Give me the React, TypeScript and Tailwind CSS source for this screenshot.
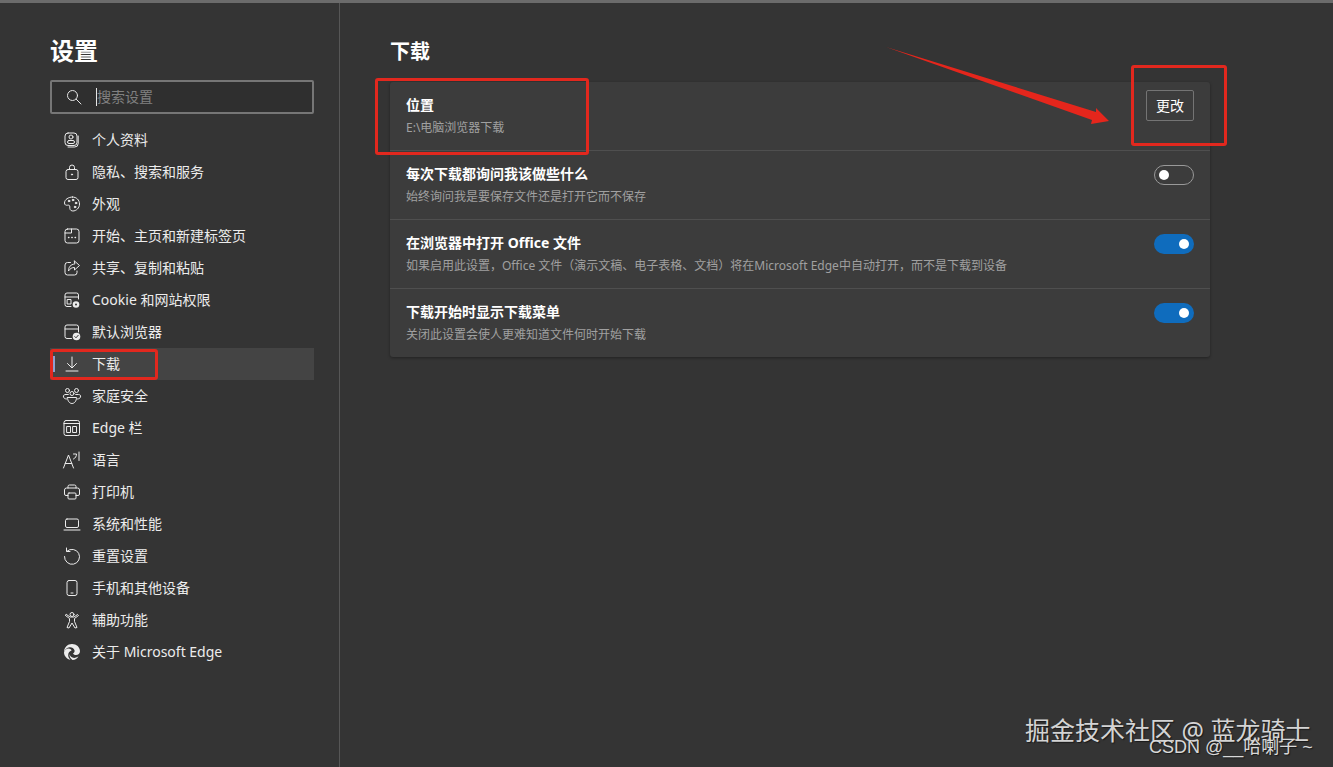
import React from 'react'

type IconProps = { children: React.ReactNode }

function Icon({ children }: IconProps) {
    return (
        <svg viewBox="0 0 16 16" fill="none" stroke="#ececec" strokeWidth="1" strokeLinecap="round" strokeLinejoin="round" className="w-4 h-4 shrink-0 overflow-visible">
            {children}
        </svg>
    )
}

const icons: Record<string, React.ReactNode> = {
    profile: (
        <>
            <rect x="1" y="1" width="12" height="12.5" rx="3" />
            <path d="M14.2 4v7.5a3.5 3.5 0 0 1-3.5 3.5H4" />
            <circle cx="7" cy="5" r="2" />
            <rect x="3.5" y="8.5" width="7" height="3" rx="1.5" />
        </>
    ),
    lock: (
        <>
            <rect x="2" y="5.5" width="12" height="10" rx="2" />
            <path d="M5.5 5.5V3.5a2.5 2.5 0 0 1 5 0v2" />
            <circle cx="8" cy="10.5" r="0.6" fill="#ececec" />
        </>
    ),
    palette: (
        <>
            <path d="M8.5 1C4.5 1 .5 3.5.5 7c0 2 1.5 2.5 3 2.2 1.500-.3 2.500.3 2.300 1.800-.2 1.500.2 4 3 4 3.500 0 6.700-3 6.700-7s-3-7-7-7z" />
            <circle cx="5" cy="5" r="0.8" fill="#ececec" />
            <circle cx="9" cy="4" r="0.8" fill="#ececec" />
            <circle cx="12" cy="7" r="0.8" fill="#ececec" />
            <circle cx="11" cy="11" r="0.8" fill="#ececec" />
        </>
    ),
    start: (
        <>
            <rect x="1" y="1" width="14" height="14" rx="2.500" />
            <path d="M1 5h6.500V1" />
            <path d="M4.500 9.500h.4M7.800 9.500h.4M11.100 9.500h.4" strokeWidth="1.400" />
        </>
    ),
    share: (
        <>
            <path d="M6.500 2.500H3.500a2.500 2.500 0 0 0-2.500 2.500v7.500a2.500 2.500 0 0 0 2.500 2.500h7a2.500 2.500 0 0 0 2.500-2.500V11" />
            <path d="M10.500 1l5 4.500-5 4.500V7.500C8 7.500 6 8.500 4.500 11c0-4 2-6.500 6-7z" />
        </>
    ),
    cookie: (
        <>
            <path d="M7 14.500H3a2 2 0 0 1-2-2V3a2 2 0 0 1 2-2h9.500a2 2 0 0 1 2 2v4" />
            <path d="M1 5h13.500" />
            <rect x="3.500" y="7.500" width="3.500" height="4.500" />
            <circle cx="12" cy="12.500" r="3.300" fill="#ececec" stroke="none" />
            <circle cx="12" cy="12.500" r="1" fill="#343434" stroke="none" />
        </>
    ),
    browser: (
        <>
            <path d="M7.500 14.500H3a2 2 0 0 1-2-2V3a2 2 0 0 1 2-2h9.500a2 2 0 0 1 2 2v5" />
            <path d="M1 5h13.500" />
            <circle cx="12.500" cy="12.500" r="3.800" fill="#ececec" stroke="none" />
            <path d="M10.800 12.600l1.200 1.200 2.200-2.500" stroke="#343434" />
        </>
    ),
    download: (
        <>
            <path d="M8 1v10.500" />
            <path d="M3.500 7.500L8 12l4.500-4.500" />
            <path d="M2 15h12" />
        </>
    ),
    family: (
        <>
            <circle cx="3.500" cy="2.500" r="2" />
            <circle cx="12.500" cy="2.500" r="2" />
            <circle cx="8" cy="5.500" r="2" />
            <path d="M1.500 6.500h2.800M11.700 6.500h2.800C16 6.500 17 7.500 16.500 9c-.4 1.200-1.500 2-3 2M1.500 6.500C0 6.500-1 7.500-.5 9c.4 1.200 1.500 2 3 2" />
            <path d="M3.500 9.500h9c0 3.500-2 6-4.500 6s-4.500-2.500-4.500-6z" />
        </>
    ),
    edgebar: (
        <>
            <rect x="0" y="0.500" width="15.500" height="15" rx="2" />
            <path d="M0 3.500h15.500" />
            <rect x="3" y="6.500" width="3.500" height="6" />
            <rect x="9" y="6.500" width="3.500" height="6" />
        </>
    ),
    language: (
        <>
            <path d="M-.5 16L4.500 3l5 13M1.200 11.500h6.600" />
            <path d="M9.500 2h3c0 2.200-1 4-3 5M15 0v8.500" />
        </>
    ),
    printer: (
        <>
            <path d="M4 4V2.500A1.500 1.500 0 0 1 5.500 1h5A1.500 1.500 0 0 1 12 2.500V4" />
            <path d="M4 11.500H2A1.500 1.500 0 0 1 .5 10V6A2 2 0 0 1 2.500 4h11a2 2 0 0 1 2 2v4a1.500 1.500 0 0 1-1.500 1.500h-2" />
            <rect x="4" y="9" width="8" height="6" rx="1" />
        </>
    ),
    laptop: (
        <>
            <rect x="1.500" y="3" width="13" height="8.500" rx="1.500" />
            <path d="M0 14h16" />
        </>
    ),
    reset: (
        <>
            <path d="M3 3.200A7.500 7.500 0 1 1 .5 8.500" />
            <path d="M2.500 0v3.500H6" />
        </>
    ),
    phone: (
        <>
            <rect x="3" y="0.500" width="10" height="15" rx="2" />
            <path d="M7 13h2" />
        </>
    ),
    access: (
        <>
            <circle cx="8" cy="2.500" r="2" />
            <path d="M1.500 3.500L5.500 6.500v3L3 15.500l2 .5L8 11l3 5 2-.5-2.500-6v-3l4-3-1-1L10 5H6L2.500 2.500z" />
        </>
    ),
    edge: (
        <>
            <path
                d="M8 0c4.500 0 8 3.200 8 7.200 0 2.300-1.700 3.800-4 3.800-1.500 0-2.800-.6-3-1.500C10.500 8.500 10.800 7.500 10.500 6.300 9.800 4 7.500 3 5.500 3.300 3 3.700 1 5.500 0 8 .2 3.500 3.500 0 8 0z"
                fill="#ececec"
                stroke="none"
            />
            <path
                d="M0 8.500c.3-2 2.200-4 4.500-4 1.800 0 3 1 3 2-2 .6-3.500 2.500-3.300 5 .1 1.600 1 3 2.300 4.200C3 15.200.2 12.300 0 8.500z"
                fill="#ececec"
                stroke="none"
            />
            <path
                d="M5.500 10c.5 2.500 3 4.700 6.500 3.600.8-.2 1.800-.8 2.500-1.400-1 2.300-3.500 3.800-6 3.800-2-1.300-3.300-3.500-3-6z"
                fill="#ececec"
                stroke="none"
            />
        </>
    ),
}

const navItems = [
    { label: '个人资料', icon: 'profile' },
    { label: '隐私、搜索和服务', icon: 'lock' },
    { label: '外观', icon: 'palette' },
    { label: '开始、主页和新建标签页', icon: 'start' },
    { label: '共享、复制和粘贴', icon: 'share' },
    { label: 'Cookie 和网站权限', icon: 'cookie' },
    { label: '默认浏览器', icon: 'browser' },
    { label: '下载', icon: 'download', active: true },
    { label: '家庭安全', icon: 'family' },
    { label: 'Edge 栏', icon: 'edgebar' },
    { label: '语言', icon: 'language' },
    { label: '打印机', icon: 'printer' },
    { label: '系统和性能', icon: 'laptop' },
    { label: '重置设置', icon: 'reset' },
    { label: '手机和其他设备', icon: 'phone' },
    { label: '辅助功能', icon: 'access' },
    { label: '关于 Microsoft Edge', icon: 'edge' },
]

function Toggle({ on }: { on: boolean }) {
    if (on) {
        return (
            <div className="w-10 h-5 rounded-full bg-[#0f6cbd] flex items-center justify-end pr-[5px]">
                <div className="w-[10px] h-[10px] rounded-full bg-white" />
            </div>
        )
    }
    return (
        <div className="w-10 h-5 rounded-full border border-[#999] flex items-center pl-[4px]">
            <div className="w-[10px] h-[10px] rounded-full bg-white" />
        </div>
    )
}

function SettingRow({ title, desc, children, last }: { title: string; desc: string; children: React.ReactNode; last?: boolean }) {
    return (
        <div className={`flex justify-between pl-4 pr-4 pt-[13px] ${last ? 'h-[68px]' : 'h-[69px] border-b border-[#4f4f4f]'}`}>
            <div>
                <div className="text-sm font-bold leading-5 text-white">{title}</div>
                <div className="text-xs leading-[18px] mt-[4px] text-[#a0a0a0]">{desc}</div>
            </div>
            {children}
        </div>
    )
}

export default function App() {
    return (
        <div
            className="h-screen w-full overflow-hidden relative flex flex-col bg-[#343434] text-[#ececec]"
            style={{ fontFamily: '"Noto Sans", "Noto Sans CJK SC", sans-serif' }}
        >
            <div className="h-[3px] bg-[#6b6b6b] shrink-0" />
            <div className="flex flex-1">
                {/* Sidebar */}
                <aside className="w-[340px] shrink-0 border-r border-[#565656] pl-[50px] pr-[25px] pt-[32px]">
                    <h1 className="text-2xl font-bold leading-8 text-white">设置</h1>
                    <div className="mt-[13px] h-[34px] border-2 border-[#767676] rounded-[2px] bg-[#2f2f2f] flex items-center pl-[14px] pb-[1px]">
                        <svg viewBox="0 0 16 16" fill="none" stroke="#e6e6e6" strokeWidth="1" strokeLinecap="round" className="w-4 h-4 shrink-0">
                            <circle cx="6.500" cy="6.500" r="5" />
                            <path d="M10.200 10.200L15 15" />
                        </svg>
                        <div className="w-px h-[18px] bg-[#e6e6e6] ml-[14px]" />
                        <span className="text-sm text-[#808080]">搜索设置</span>
                    </div>
                    <nav className="mt-[10px]">
                        {navItems.map((item) => (
                            <div
                                key={item.label}
                                className={`relative h-8 flex items-center gap-3 pl-[14px] text-sm ${item.active ? 'bg-[#444444]' : ''}`}
                            >
                                {item.active && <div className="absolute left-[3px] top-2 w-[2px] h-4 bg-[#8f9fd0]" />}
                                <Icon>{icons[item.icon]}</Icon>
                                <span>{item.label}</span>
                            </div>
                        ))}
                    </nav>
                </aside>

                {/* Main */}
                <main className="flex-1 pl-[50px] pt-[33px]">
                    <h2 className="text-xl font-bold leading-8 text-white">下载</h2>
                    <div className="mt-[14px] w-[820px] bg-[#3c3c3c] rounded-[3px] shadow-[0_1px_3px_rgba(0,0,0,0.35)]">
                        <SettingRow title="位置" desc="E:\电脑浏览器下载">
                            <button className="w-12 h-[31px] -mt-[5px] border border-[#747474] rounded-[2px] text-sm text-white">更改</button>
                        </SettingRow>
                        <SettingRow title="每次下载都询问我该做些什么" desc="始终询问我是要保存文件还是打开它而不保存">
                            <div className="mt-[1px]"><Toggle on={false} /></div>
                        </SettingRow>
                        <SettingRow title="在浏览器中打开 Office 文件" desc="如果启用此设置，Office 文件（演示文稿、电子表格、文档）将在Microsoft Edge中自动打开，而不是下载到设备">
                            <div className="mt-[1px]"><Toggle on /></div>
                        </SettingRow>
                        <SettingRow title="下载开始时显示下载菜单" desc="关闭此设置会使人更难知道文件何时开始下载" last>
                            <div className="mt-[1px]"><Toggle on /></div>
                        </SettingRow>
                    </div>
                </main>
            </div>

            {/* Red annotations */}
            <div className="absolute left-[50px] top-[349px] w-[108px] h-[31px] border-[3px] border-[#e2281e] rounded-[3px]" />
            <div className="absolute left-[375px] top-[78px] w-[214px] h-[77px] border-[3px] border-[#e2281e] rounded-[3px]" />
            <div className="absolute left-[1131px] top-[65px] w-[96px] h-[81px] border-[3px] border-[#e2281e] rounded-[3px]" />
            <svg className="absolute left-0 top-0 pointer-events-none" width="1333" height="767">
                <polygon points="886,47 1096,112 1096,108 1109,121 1091,124 1092,120" fill="#e5261c" />
            </svg>

            {/* Watermarks */}
            <div className="absolute left-[1025px] top-[714px] text-[25px] leading-8 whitespace-nowrap text-[#d4d4d4] [text-shadow:1px_1px_1px_#1a1a1a]">
                掘金技术社区 @ 蓝龙骑士
            </div>
            <div
                className="absolute left-[1149px] top-[735px] text-lg leading-6 whitespace-nowrap text-[#d8d8d8] [text-shadow:1px_1px_1px_#1a1a1a]"
                style={{ fontFamily: '"Liberation Sans", "Noto Sans CJK SC", sans-serif' }}
            >
                CSDN @__哈喇子 ~
            </div>
        </div>
    )
}
